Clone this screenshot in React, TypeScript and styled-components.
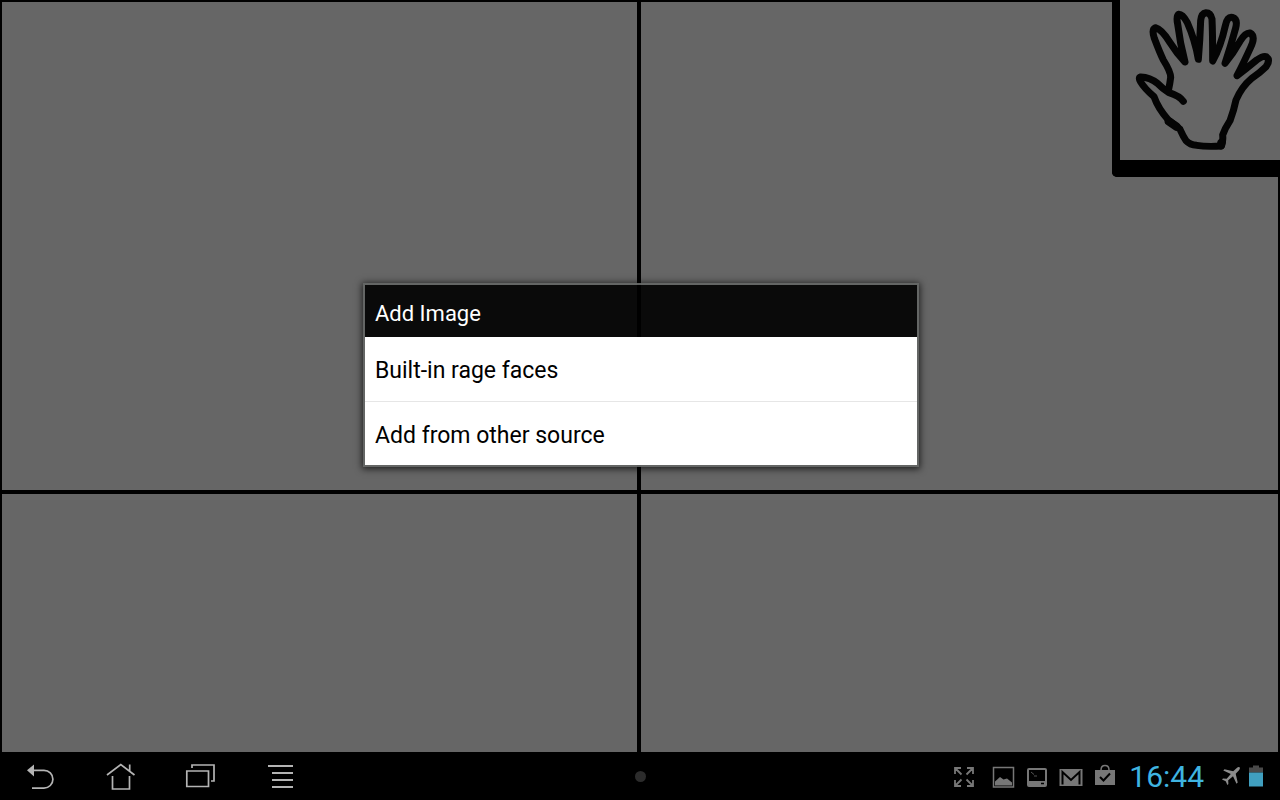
import React from 'react';
import styled, { createGlobalStyle } from 'styled-components';

const GlobalStyle = createGlobalStyle`
  * { box-sizing: border-box; }
  body {
    margin: 0;
    background: #000;
    font-family: Roboto, "Liberation Sans", sans-serif;
  }
  button {
    border: 0;
    padding: 0;
    margin: 0;
    background: none;
    font: inherit;
    cursor: pointer;
  }
`;

const Screen = styled.div`
  display: flex;
  flex-direction: column;
  min-height: 100vh;
`;

const Comic = styled.main`
  position: relative;
  flex: 1;
  display: grid;
  grid-template-columns: 635fr 637fr;
  grid-template-rows: 488fr 258fr;
  gap: 4px;
  padding: 2px 2px 0;
  background: #000;
`;

const Panel = styled.section`
  background: #666;
`;

const HandButton = styled.button`
  position: absolute;
  top: 0;
  right: 0;
  border: solid #000;
  border-width: 0 0 17px 8px;
  border-bottom-left-radius: 5px;
  background: #666;
  line-height: 0;
`;

const Overlay = styled.div`
  position: absolute;
  inset: 0;
  display: flex;
  align-items: center;
  justify-content: center;
  padding: 0 0 2px 2px;
`;

const Dialog = styled.div`
  width: 556px;
  max-width: 100%;
  border: 2px solid rgba(100, 102, 101, 0.95);
  background: rgba(0, 0, 0, 0.9);
  background-clip: padding-box;
  box-shadow: 0 1px 7px 1px rgba(0, 0, 0, 0.7);
`;

const DialogTitle = styled.h1`
  margin: 0;
  padding: 6px 10px 0;
  font-size: 22px;
  font-weight: 400;
  line-height: 46px;
  color: #fff;
`;

const Choices = styled.ul`
  margin: 0;
  padding: 0;
  list-style: none;
  background: #fff;
`;

const Choice = styled.li`
  display: grid;
  min-height: 64px;
  & + & { border-top: 1px solid #e6e6e6; }
`;

const ChoiceButton = styled.button`
  padding: 4px 10px 0;
  text-align: left;
  font-size: 23px;
  line-height: 28px;
  color: #000;
`;

const SystemBar = styled.footer`
  display: grid;
  grid-template-columns: 1fr auto 1fr;
  align-items: center;
  height: 48px;
  background: #000;
`;

const NavKeys = styled.nav`
  display: flex;
`;

const NavKey = styled.button`
  display: flex;
  align-items: center;
  justify-content: center;
  width: 80px;
  height: 48px;
`;

const Dot = styled.span`
  width: 11px;
  height: 11px;
  border-radius: 50%;
  background: #2c2c2c;
`;

const Status = styled.div`
  display: flex;
  align-items: center;
  justify-content: flex-end;
  gap: 17px;
  padding-right: 16px;
`;

const Notices = styled.div`
  display: flex;
  align-items: center;
  gap: 11px;
`;

const Clock = styled.time`
  font-size: 30px;
  line-height: 44px;
  padding-top: 2px;
  margin-left: -4px;
  color: #3fb4e0;
`;

const Signals = styled.div`
  display: flex;
  align-items: center;
  gap: 8px;
`;

const Hand = () => (
  <svg width="160" height="160" viewBox="60 0 480 480" fill="none" stroke="#040404" strokeWidth="21" strokeLinecap="round" strokeLinejoin="round">
    <path d="M250 304Q240 288 205 277Q190 268 172 250Q150 232 122 231Q114 233 122 246Q134 266 162 290Q174 325 205 360L240 388Q250 410 258 422Q270 435 290 436Q320 441 364 438Q370 425 368 405Q375 385 390 362Q402 330 408 300Q425 260 455 235Q480 218 498 200Q512 180 499 170Q490 166 470 180Q440 205 411 227Q430 190 452 142Q468 108 450 99Q436 97 420 124Q400 160 375 190Q392 140 407 84Q414 57 397 52Q382 48 376 77Q362 140 338 183Q338 100 336 57Q332 38 318 38Q304 40 302 62Q300 120 295 178Q285 120 262 68Q248 42 236 43Q228 48 233 72Q240 130 255 186Q230 160 208 125Q185 88 166 83Q154 88 163 115Q180 160 190 180Q212 215 212 232Q210 250 205 272" />
    <path strokeWidth="25" d="M206 364L230 380M364 428L363 436" />
  </svg>
);

const BackIcon = () => (
  <svg width="32" height="32" viewBox="0 0 32 32" fill="none" stroke="#b4b4b4" strokeWidth="1.7">
    <path d="M9 10.300H20A8.900 8.900 0 0 1 20 28.100H8" />
    <path d="M3 10.300L10 4.500V16.500Z" fill="#b4b4b4" stroke="none" />
  </svg>
);

const HomeIcon = () => (
  <svg width="32" height="32" viewBox="0 0 32 32" fill="none" stroke="#b4b4b4" strokeWidth="1.7">
    <path d="M3 15L16.800 4.500L30.500 15M25.700 4.500V11M8.500 16V29H25.500V16" />
  </svg>
);

const RecentIcon = () => (
  <svg width="32" height="32" viewBox="0 0 32 32" fill="none" stroke="#b4b4b4" strokeWidth="1.7">
    <path d="M2.800 11H24.500V26.500H2.800ZM8 8V5H30V21H27" />
  </svg>
);

const MenuIcon = () => (
  <svg width="32" height="32" viewBox="0 0 32 32" stroke="#b4b4b4" strokeWidth="2">
    <path d="M4 6H29M8 13H29M8 20H29M8 27H29" />
  </svg>
);

const ExpandIcon = () => (
  <svg width="22" height="24" viewBox="0 0 22 24" fill="none" stroke="#777" strokeWidth="1.8">
    <path d="M8 4H2V10M2.500 4.500L8.500 10.500M14 4H20V10M19.500 4.500L13.500 10.500M2 16V22H8M2.500 21.500L8.500 15.500M20 16V22H14M19.500 21.500L13.500 15.500" />
  </svg>
);

const PictureIcon = () => (
  <svg width="23" height="24" viewBox="0 0 23 24">
    <path d="M1.500 3.500H21.500V23H1.500Z" fill="none" stroke="#777" strokeWidth="1.500" />
    <path d="M3 21.500V17.500L8 13L11.500 15.500L15 14.500L20 18.500V21.500Z" fill="#777" />
  </svg>
);

const TerminalIcon = () => (
  <svg width="22" height="24" viewBox="0 0 22 24">
    <rect x="2" y="5" width="18" height="17" rx="1" fill="none" stroke="#777" strokeWidth="2" />
    <path d="M2 17H20V22H2Z" fill="#777" />
    <path d="M5 8L8 10.500M8 12H11" stroke="#555" fill="none" />
    <path d="M15 19.500H18" stroke="#000" strokeWidth="1.500" />
  </svg>
);

const MailIcon = () => (
  <svg width="24" height="24" viewBox="0 0 24 24">
    <path d="M0.500 5H23.500V22H0.500Z" fill="#777" />
    <path d="M3.500 20.500V8L12 16L20.500 8V20.500" fill="none" stroke="#000" strokeWidth="2" />
  </svg>
);

const BagIcon = () => (
  <svg width="22" height="24" viewBox="0 0 22 24">
    <path d="M1 6H21V21H1Z" fill="#777" />
    <path d="M7 6Q7 1.500 11 1.500T15 6" fill="none" stroke="#777" strokeWidth="1.500" />
    <path d="M6 13L9.500 16.500L16 9.500" fill="none" stroke="#000" strokeWidth="2" />
  </svg>
);

const PlaneIcon = () => (
  <svg width="20" height="20" viewBox="0 0 20 20" fill="#8c8c8c">
    <path d="M18.700 1.300Q17.500 0.500 15.500 2.200L12.200 5.300L3.500 3.300L2.300 4.500L9.800 8L5.700 12.800L2 12.600L1 13.600L4.700 15.300L6.400 19L7.400 18L7.200 14.300L12 10.200L15.500 17.700L16.700 16.500L14.700 7.800L17.800 4.500Q19.500 2.500 18.700 1.300Z" />
  </svg>
);

const BatteryIcon = () => (
  <svg width="15" height="22" viewBox="0 0 15 22">
    <path d="M0 2.500H4V0.500H10V2.500H14V7.500H0Z" fill="#4a4a4a" />
    <path d="M0 7.500H14V21.500H0Z" fill="#409fbf" />
  </svg>
);

const keys = [
  { label: 'Back', Icon: BackIcon },
  { label: 'Home', Icon: HomeIcon },
  { label: 'Recent apps', Icon: RecentIcon },
  { label: 'Menu', Icon: MenuIcon },
];

const choices = ['Built-in rage faces', 'Add from other source'];

export default function App() {
  return (
    <Screen>
      <GlobalStyle />
      <Comic>
        <Panel />
        <Panel />
        <Panel />
        <Panel />
        <HandButton type="button" aria-label="Move">
          <Hand />
        </HandButton>
        <Overlay>
          <Dialog role="dialog" aria-labelledby="dialog-title">
            <DialogTitle id="dialog-title">Add Image</DialogTitle>
            <Choices>
              {choices.map((text) => (
                <Choice key={text}>
                  <ChoiceButton type="button">{text}</ChoiceButton>
                </Choice>
              ))}
            </Choices>
          </Dialog>
        </Overlay>
      </Comic>
      <SystemBar>
        <NavKeys>
          {keys.map(({ label, Icon }) => (
            <NavKey key={label} type="button" aria-label={label}>
              <Icon />
            </NavKey>
          ))}
        </NavKeys>
        <Dot />
        <Status>
          <ExpandIcon />
          <Notices>
            <PictureIcon />
            <TerminalIcon />
            <MailIcon />
            <BagIcon />
          </Notices>
          <Clock>16:44</Clock>
          <Signals>
            <PlaneIcon />
            <BatteryIcon />
          </Signals>
        </Status>
      </SystemBar>
    </Screen>
  );
}
